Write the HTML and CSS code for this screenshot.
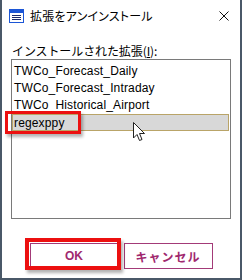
FILE: index.html
```html
<!DOCTYPE html>
<html lang="ja">
<head>
<meta charset="utf-8">
<link rel="stylesheet" href="styles.css">
</head>
<body>
<div class="window">
  <div class="titlebar">
    <svg class="app-icon" width="15" height="14" viewBox="0 0 15 14">
      <rect x="0.5" y="0.5" width="14" height="13" fill="#ffffff" stroke="#1c56d6"/>
      <rect x="1" y="1" width="13" height="3" fill="#1c56d6"/>
      <rect x="3" y="6" width="9" height="1" fill="#1a2a6a"/>
      <rect x="3" y="8" width="9" height="1" fill="#1a2a6a"/>
      <rect x="3" y="10" width="9" height="1" fill="#1a2a6a"/>
    </svg>
    <span class="title">拡張をアンインストール</span>
    <svg class="close" width="10" height="10" viewBox="0 0 10 10">
      <path d="M0.5 0.5 L9.5 9.5 M9.5 0.5 L0.5 9.5" stroke="#111" stroke-width="1"/>
    </svg>
  </div>
  <div class="content">
    <div class="label">インストールされた拡張(<span class="ul">I</span>):</div>
    <div class="listbox">
      <div class="item">TWCo_Forecast_Daily</div>
      <div class="item">TWCo_Forecast_Intraday</div>
      <div class="item">TWCo_Historical_Airport</div>
      <div class="item selected">regexppy
        <div class="mark mark-item"></div>
        <svg class="cursor" width="13" height="20" viewBox="0 0 13 20">
          <path d="M0.5 0.5 L0.5 16 L4 12.5 L6.5 18.5 L9 17.5 L6.5 11.5 L11.5 11.5 Z" fill="#ffffff" stroke="#222" stroke-width="1" stroke-linejoin="miter"/>
        </svg>
      </div>
    </div>
  </div>
  <div class="buttons">
    <div class="btn-wrap">
      <button class="btn">OK</button>
      <div class="mark mark-ok"></div>
    </div>
    <button class="btn btn-cancel">キャンセル</button>
  </div>
</div>
</body>
</html>
```
FILE: styles.css
```css
html, body {
  margin: 0;
  padding: 0;
  background: #ffffff;
}
.window {
  width: 242px;
  height: 280px;
  box-sizing: border-box;
  border: 2px solid #4a5868;
  border-top: 0;
  background: #ffffff;
  display: flex;
  flex-direction: column;
  font-family: "Liberation Sans", "Noto Sans CJK JP", sans-serif;
  color: #000;
}
.titlebar {
  height: 31px;
  display: flex;
  align-items: center;
  padding-left: 7px;
  padding-right: 11px;
  flex-shrink: 0;
}
.app-icon {
  display: block;
  margin-right: 6px;
  margin-top: 1px;
}
.title {
  font-family: "Noto Sans CJK JP", sans-serif;
  font-size: 12px;
  font-feature-settings: "palt";
  letter-spacing: 0.2px;
  flex: 1;
  line-height: 16px;
  margin-top: 1px;
}
.close {
  display: block;
}
.content {
  padding: 0 9px;
  margin-top: 11px;
}
.label {
  font-family: "Noto Sans CJK JP", sans-serif;
  font-size: 12px;
  line-height: 17px;
  height: 17px;
  padding-left: 1px;
  letter-spacing: -0.1px;
}
.ul {
  text-decoration: underline;
}
.listbox {
  height: 160px;
  box-sizing: border-box;
  border: 1px solid #7a7a7a;
  padding: 3px 1px 0 0;
}
.item {
  position: relative;
  height: 17px;
  line-height: 17px;
  font-size: 12px;
  padding-left: 2px;
  letter-spacing: 0.15px;
  box-sizing: border-box;
}
.selected {
  background: #d8d8d8;
  border: 1px solid #b9a468;
  line-height: 16px;
  padding-left: 1px;
}
.mark {
  position: absolute;
  border: 3px solid #ec1010;
  box-shadow: 2px 3px 3px rgba(0, 0, 0, 0.3);
  pointer-events: none;
}
.mark-item {
  left: -8px;
  top: -4px;
  width: 70px;
  height: 17px;
}
.cursor {
  position: absolute;
  left: 120px;
  top: 7px;
}
.buttons {
  display: flex;
  justify-content: center;
  gap: 5px;
  margin-top: 24px;
}
.btn-wrap {
  position: relative;
}
.btn {
  display: block;
  width: 89px;
  height: 26px;
  box-sizing: border-box;
  border: 1px solid #a33a78;
  background: #ffffff;
  color: #a0286e;
  font-family: "Liberation Sans", "Noto Sans CJK JP", sans-serif;
  font-weight: bold;
  font-size: 12px;
  padding: 0;
}
.btn-cancel {
  font-family: "Noto Sans CJK JP", sans-serif;
  letter-spacing: 1px;
}
.mark-ok {
  left: -5px;
  top: -5px;
  right: -2px;
  bottom: -1px;
  border-width: 4px;
}
```
